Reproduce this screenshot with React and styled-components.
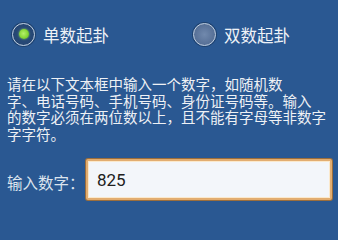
import React from 'react';
import styled, { createGlobalStyle } from 'styled-components';

const GlobalStyle = createGlobalStyle`
    html, body {
        margin: 0;
        padding: 0;
        background: #2a5892;
    }
    body {
        font-family: "Noto Sans CJK SC", "Noto Sans", sans-serif;
        color: #f2f4f7;
    }
`;

const Page = styled.div`
    width: 338px;
    height: 211px;
    overflow: hidden;
    padding: 21px 6px 0 7px;
    box-sizing: border-box;
    background: #2a5892;
`;

const RadioRow = styled.div`
    display: grid;
    grid-template-columns: 181px 1fr;
    padding-left: 5px;
    height: 24px;
`;

const RadioOption = styled.label`
    display: flex;
    align-items: center;
    gap: 8px;
    font-size: 16.5px;
    line-height: 24px;
    padding-top: 2px;
    color: #eef2f7;
`;

const RadioCircle = styled.span`
    width: 23px;
    height: 23px;
    margin-top: -2px;
    border-radius: 50%;
    box-sizing: border-box;
    border: 1.5px solid #c3cfdd;
    box-shadow: 0 0 0 1px #1f416d;
    background: ${(p) =>
        p.checked
            ? 'radial-gradient(circle, #2a4d7c 0%, #23436f 100%)'
            : 'radial-gradient(circle, #7189ad 0%, #5a7399 60%, #4d6890 100%)'};
    display: flex;
    align-items: center;
    justify-content: center;
    flex-shrink: 0;
`;

const RadioDot = styled.span`
    width: 10px;
    height: 10px;
    border-radius: 50%;
    background: radial-gradient(circle at 45% 45%, #b6f06a 0%, #86d836 55%, #5fae24 100%);
    box-shadow: 0 0 2px #9ce84c;
`;

const Hint = styled.p`
    margin: 31px 0 0;
    font-size: 14.5px;
    line-height: 16.6px;
    white-space: nowrap;
    color: #eef1f5;
`;

const InputRow = styled.div`
    display: flex;
    align-items: center;
    margin-top: 17px;
`;

const InputLabel = styled.span`
    width: 79px;
    font-size: 15.5px;
    line-height: 20px;
    padding-top: 4px;
    color: #dce4ee;
`;

const NumberInput = styled.input`
    width: 246px;
    height: 41px;
    box-sizing: border-box;
    border: 2px solid #e2ad70;
    border-radius: 2px;
    box-shadow: 0 0 0 1px #9c6e3c, inset 0 0 0 1px #fbe9cc;
    background: #f3f6fa;
    padding: 0 9px;
    font-family: Roboto, "Noto Sans", sans-serif;
    font-size: 17px;
    color: #202020;
    outline: none;
`;

function App() {
    return (
        <Page>
            <GlobalStyle />
            <RadioRow>
                <RadioOption>
                    <RadioCircle checked>
                        <RadioDot />
                    </RadioCircle>
                    单数起卦
                </RadioOption>
                <RadioOption>
                    <RadioCircle />
                    双数起卦
                </RadioOption>
            </RadioRow>
            <Hint>
                请在以下文本框中输入一个数字，如随机数
                <br />
                字、电话号码、手机号码、身份证号码等。输入
                <br />
                的数字必须在两位数以上，且不能有字母等非数字
                <br />
                字字符。
            </Hint>
            <InputRow>
                <InputLabel>输入数字：</InputLabel>
                <NumberInput type="text" defaultValue="825" />
            </InputRow>
        </Page>
    );
}

export default App;
